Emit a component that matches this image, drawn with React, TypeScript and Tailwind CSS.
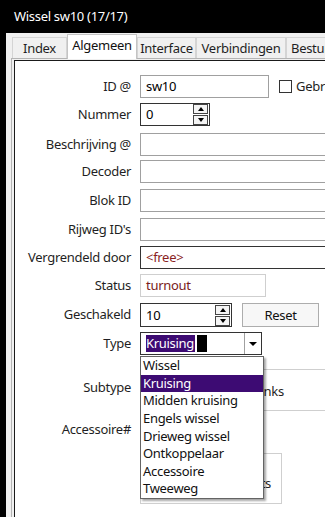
import React from 'react';

const font = { fontFamily: "'Noto Sans', 'Open Sans', sans-serif" };

const typeOptions = ['Wissel', 'Kruising', 'Midden kruising', 'Engels wissel', 'Drieweg wissel', 'Ontkoppelaar', 'Accessoire', 'Tweeweg'];

function Row({ label, h, children }: { label: string; h: string; children?: React.ReactNode }) {
    return (
        <div className={`flex items-start ${h}`}>
            <div className="w-[116px] h-[23px] flex items-center justify-end text-[#1f1f24] shrink-0">{label}</div>
            <div className="ml-[9px] flex items-center min-w-0 flex-1">{children}</div>
        </div>
    );
}

function SpinButtons() {
    return (
        <div className="flex flex-col gap-px mr-px">
            <div className="w-[15px] h-[10px] border border-[#444] bg-[#f4f4f4] flex items-center justify-center">
                <div className="w-0 h-0 border-l-[3px] border-r-[3px] border-b-[4px] border-l-transparent border-r-transparent border-b-black" />
            </div>
            <div className="w-[15px] h-[10px] border border-[#444] bg-[#f4f4f4] flex items-center justify-center">
                <div className="w-0 h-0 border-l-[3px] border-r-[3px] border-t-[4px] border-l-transparent border-r-transparent border-t-black" />
            </div>
        </div>
    );
}

export default function App() {
    return (
        <div className="relative w-[325px] h-[517px] overflow-hidden bg-black text-[13px] leading-none tracking-[-0.3px]" style={font}>
            {/* titelbalk */}
            <div className="h-[33px] flex items-center pl-[14px] text-white">Wissel sw10 (17/17)</div>

            <div className="flex h-[484px]">
                <div className="w-[6px] shrink-0 bg-black" />
                <div className="flex-1 min-w-0 bg-[#f0f0f0] pl-[5px] pt-px flex flex-col">
                    {/* tabs */}
                    <div className="flex items-end h-[25px] ml-px -mb-px relative z-10 whitespace-nowrap overflow-hidden">
                        <div className="w-[55px] h-[21px] mb-px border border-b-0 border-[#d4d4d4] flex items-center justify-center text-[#1f1f24] shrink-0">Index</div>
                        <div className="w-[70px] h-[25px] border border-b-0 border-[#c4c4c4] bg-white flex items-center justify-center text-[#111] shrink-0 pb-[3px]">Algemeen</div>
                        <div className="w-[59px] h-[21px] mb-px border border-b-0 border-[#d4d4d4] flex items-center justify-center text-[#1f1f24] shrink-0">Interface</div>
                        <div className="w-[90px] h-[21px] mb-px border border-b-0 border-[#d4d4d4] flex items-center justify-center text-[#1f1f24] shrink-0">Verbindingen</div>
                        <div className="w-[60px] h-[21px] mb-px border border-b-0 border-r-0 border-[#d4d4d4] flex items-center pl-[4px] text-[#1f1f24] shrink-0">Besturing</div>
                    </div>

                    {/* paneel */}
                    <div className="flex-1 border-l border-t border-[#b4b4b4] pl-[2px] pt-px">
                        <div className="h-full border-l border-t border-[#1a1a1a] bg-white pt-[14px]">
                            <Row label="ID @" h="h-[28px]">
                                <div className="w-[129px] h-[23px] border border-[#a0a0a0] flex items-center pl-[5px] text-black shrink-0">sw10</div>
                                <div className="ml-[10px] w-[13px] h-[13px] border border-[#333] bg-white shrink-0" />
                                <div className="ml-[4px] text-[#1f1f24] whitespace-nowrap">Gebruiken</div>
                            </Row>
                            <Row label="Nummer" h="h-[30px]">
                                <div className="w-[70px] h-[23px] border border-[#333] flex items-center justify-between pl-[5px] text-black shrink-0">
                                    <span>0</span>
                                    <SpinButtons />
                                </div>
                            </Row>
                            <Row label="Beschrijving @" h="h-[27px]">
                                <div className="w-[200px] h-[23px] border border-[#a0a0a0] shrink-0" />
                            </Row>
                            <Row label="Decoder" h="h-[29px]">
                                <div className="w-[200px] h-[23px] border border-[#a0a0a0] shrink-0" />
                            </Row>
                            <Row label="Blok ID" h="h-[29px]">
                                <div className="w-[200px] h-[23px] border border-[#a0a0a0] shrink-0" />
                            </Row>
                            <Row label="Rijweg ID's" h="h-[28px]">
                                <div className="w-[200px] h-[23px] border border-[#a0a0a0] shrink-0" />
                            </Row>
                            <Row label="Vergrendeld door" h="h-[28px]">
                                <div className="w-[200px] h-[23px] border border-[#333] flex items-center pl-[5px] text-[#8a1f1f] shrink-0">&lt;free&gt;</div>
                            </Row>
                            <Row label="Status" h="h-[29px]">
                                <div className="w-[126px] h-[23px] border border-[#cfcfcf] flex items-center pl-[5px] text-[#7a1c1c] shrink-0">turnout</div>
                            </Row>
                            <Row label="Geschakeld" h="h-[29px]">
                                <div className="w-[92px] h-[24px] border border-[#333] flex items-center justify-between pl-[5px] text-black shrink-0">
                                    <span>10</span>
                                    <SpinButtons />
                                </div>
                                <div className="ml-[10px] w-[77px] h-[24px] border border-[#adadad] bg-[#f7f7f7] flex items-center justify-center text-[#111] shrink-0">Reset</div>
                            </Row>
                            <Row label="Type" h="h-[37px]">
                                <div className="w-[122px] h-[23px] border border-[#333] flex items-center pl-[5px] pr-px shrink-0">
                                    <span className="h-[17px] flex items-center bg-[#3d0b73] text-white pr-px">Kruising</span>
                                    <span className="ml-[2px] w-[10px] h-[17px] bg-black" />
                                    <div className="ml-auto w-[16px] h-[21px] border-l border-[#a0a0a0] bg-white flex items-center justify-center">
                                        <div className="w-0 h-0 border-l-[4px] border-r-[4px] border-t-[4px] border-l-transparent border-r-transparent border-t-black" />
                                    </div>
                                </div>
                            </Row>
                            <div className="flex items-center h-[42px]">
                                <div className="w-[116px] flex justify-end text-[#1f1f24] -mt-[6px] shrink-0">Subtype</div>
                                <div className="ml-[9px] flex-1 h-[42px] border border-r-0 border-[#cfcfcf] flex items-center pl-[113px] pt-[3px] text-[#1f1f24]">Links</div>
                            </div>
                            <div className="mt-[7px]">
                                <Row label="Accessoire#" h="h-[35px]">
                                    <div className="w-[70px] h-[23px] border border-[#a0a0a0] shrink-0" />
                                </Row>
                            </div>
                            <div className="ml-[125px] w-[142px] h-[51px] border border-[#cfcfcf] flex items-center justify-end pr-[10px] pt-[10px] text-[#1f1f24]">Ports</div>
                        </div>
                    </div>
                </div>
            </div>

            {/* open keuzelijst */}
            <div className="absolute left-[140px] top-[356px] w-[124px] border border-[#646464] bg-white shadow-[2px_2px_2px_rgba(0,0,0,0.35)] z-20">
                {typeOptions.map((opt) => (
                    <div
                        key={opt}
                        className={`h-[17.6px] flex items-center pl-[2px] whitespace-nowrap ${opt === 'Kruising' ? 'bg-[#3d0b73] text-white' : 'text-[#111]'}`}
                    >
                        {opt}
                    </div>
                ))}
            </div>
        </div>
    );
}
